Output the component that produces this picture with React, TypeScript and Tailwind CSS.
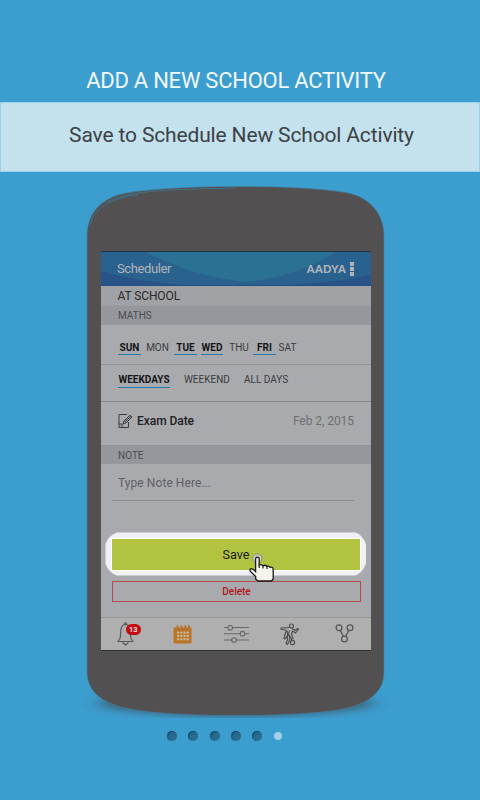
import React from "react";

const days = [
  { label: "SUN", on: true, cell: "w-[23px]" },
  { label: "MON", on: false, cell: "w-[33px]" },
  { label: "TUE", on: true, cell: "w-[23px]" },
  { label: "WED", on: true, cell: "w-[22px] ml-[4px]" },
  { label: "THU", on: false, cell: "w-[30px] pl-[2px]" },
  { label: "FRI", on: true, cell: "w-[23px]" },
  { label: "SAT", on: false, cell: "w-[23px]" },
];

function PhoneBody() {
  return (
    <svg className="absolute left-0 top-0" width="480" height="560" viewBox="0 180 480 560" fill="none">
      <defs>
        <filter id="soft" x="-20%" y="-100%" width="140%" height="300%">
          <feGaussianBlur stdDeviation="9 3.5" />
        </filter>
        <clipPath id="ground">
          <rect x="60" y="640" width="360" height="78" />
        </clipPath>
      </defs>
      <g clipPath="url(#ground)">
        <ellipse cx="236" cy="703" rx="137" ry="13" fill="#3f5866" opacity=".85" filter="url(#soft)" />
      </g>
      <path
        d="M87 236C87 213 101 198 126 193C157 188 197 186.500 236 186.500C279 186.500 318 188 346 192.500C370 197 384 214 384 236V672C384 693 368 703 344 709C315 714 276 715.500 236 715.500C194 715.500 154 714 124 708C101 702 87 691 87 672Z"
        fill="#525050"
        stroke="#4285a8"
        strokeWidth=".6"
      />
      <path d="M90 225C94 209 108 199 138 194.500M106 203C124 191 165 189.500 235 188" stroke="#3e7898" strokeWidth=".8" />
    </svg>
  );
}

function HeaderWaves() {
  return (
    <svg className="absolute inset-0" width="270" height="35" viewBox="0 0 270 35">
      <rect width="270" height="35" fill="#2a628f" />
      <path d="M45 1C80 19 110 27 145 31C184 27 212 15 235 1Z" fill="#2b7193" />
      <path d="M0 20C29 29 57 31 89 35H0ZM270 24C237 31 212 32 176 35H270Z" fill="#275389" />
      <rect width="270" height="1" fill="#1d3442" />
      <path d="M0 34.500H270" stroke="#244f7d" />
    </svg>
  );
}

function NoteIcon() {
  return (
    <svg width="15" height="16" viewBox="0 0 15 16" fill="none" stroke="#3c3c3e" strokeWidth="1">
      <path d="M9 1.500H1V14.500H10.500V9M1 11H4V14.500" />
      <path d="M5 11L6.200 7.700L12 2.200L14 4L8.200 9.700ZM6.200 7.700L8.200 9.700M7.200 8.700L12.800 3.300" />
    </svg>
  );
}

function BellIcon() {
  return (
    <svg width="28" height="26" viewBox="0 0 28 26" fill="none" stroke="#565657" strokeWidth="1.150">
      <path d="M1.500 20.500H17.500M2 20.500L4 17.500C5 14 4.300 10.500 5 8C5.800 5 7.500 3.500 9.500 3.500S13.200 5 14 8C14.700 10.500 14 14 15 17.500L17 20.500M8.500 3.500V2.500Q9.500 1.300 10.500 2.500V3.500M6.500 21.500L9.500 24L12.500 21.500" />
    </svg>
  );
}

function CalendarIcon() {
  return (
    <svg width="19" height="19" viewBox="0 0 19 19">
      <path d="M.5 2.500H3.500V.5H5.500V2.500H7.500V.5H9.500V2.500H11.500V.5H13.500V2.500H15V.5H17V2.500H18L18.500 3.500V17.500L17.500 18.500H1.500L.5 17.500Z" fill="#b87427" />
      {[6.5, 9.8, 13.1].map((y) =>
        [4, 7.2, 10.4, 13.6].map((x) => <rect key={`${x}-${y}`} x={x} y={y} width="2.200" height="2.200" fill="#c9b697" />),
      )}
    </svg>
  );
}

function SlidersIcon() {
  return (
    <svg width="25" height="18" viewBox="0 0 25 18" fill="#afafb0" stroke="#68686a" strokeWidth="1.100">
      <path d="M0 2.500H25M0 8.700H25M0 15H25" />
      <circle cx="6.200" cy="2.700" r="2.300" />
      <circle cx="18.500" cy="8.700" r="2.300" />
      <circle cx="10" cy="15" r="2.300" />
    </svg>
  );
}

function PlayerIcon() {
  return (
    <svg width="20" height="23" viewBox="0 0 20 23" fill="none" stroke="#4c4c4d" strokeWidth="1.100" strokeLinejoin="round">
      <circle cx="11.500" cy="3" r="2" />
      <path d="M9.500 4.500L1 5V6.200L6.500 7.200L5 11.500L4 15.500L5.200 16L7.300 12.500L7.500 17L6 20.500L7.500 21.500L9.500 17.500L9.500 12.500L11.500 16.500L13 15.500L11.500 11L12.500 8L15.500 10L18.800 6L17.500 5.500L15.300 7.500L12 5.500M7.500 8V12M9.200 7.500L8.500 13" />
      <circle cx="12.500" cy="19.500" r="2.100" />
    </svg>
  );
}

function NodesIcon() {
  return (
    <svg width="20" height="20" viewBox="0 0 20 20" fill="none" stroke="#555556" strokeWidth="1.250">
      <circle cx="4" cy="3.800" r="2.900" />
      <circle cx="15" cy="3.800" r="2.900" />
      <circle cx="9.500" cy="15" r="2.900" />
      <path d="M5.300 6.400L8.300 12.300M13.700 6.400L10.700 12.300" />
    </svg>
  );
}

function Pointer() {
  return (
    <svg className="absolute left-[142px] top-[21px]" width="30" height="31" viewBox="0 0 30 31">
      <circle cx="10.300" cy="5.500" r="4.600" fill="#d1d3cf" fillOpacity=".85" stroke="#7f8486" strokeWidth=".9" />
      <path
        d="M8.600 18.500V6Q8.600 4.200 10.400 4.200Q12.200 4.200 12.200 6V12Q14.600 10.800 16 12.800Q18.500 11.500 20 13.500Q22 12.500 23 14.300Q26.200 13.500 26.200 16.500V26L24.500 28H11L8.700 26V23.500L3.500 18.500Q2 16.500 4 15.700Q6 15.500 8.600 18.500Z"
        fill="#f6f3ec"
        stroke="#181818"
        strokeWidth="1.300"
      />
      <path d="M12.200 11.500V15M16 12.800V15.500M20 13.500V16" stroke="#181818" strokeWidth="1.100" />
    </svg>
  );
}

function AppHeader() {
  return (
    <header className="relative h-[35px]">
      <HeaderWaves />
      <div className="relative flex h-full items-center justify-between pl-4 pr-[17px] pt-px text-[#b2b5b8]">
        <span className="text-[13px] leading-4 tracking-[-0.4px]">Scheduler</span>
        <div className="flex items-center gap-1">
          <span className="font-['Lato'] text-[11px] font-black leading-4 tracking-[0.35px]">AADYA</span>
          <span className="flex flex-col gap-[1px]">
            <i className="size-[4px] bg-[#b2b5b8]" />
            <i className="size-[4px] bg-[#b2b5b8]" />
            <i className="size-[4px] bg-[#b2b5b8]" />
          </span>
        </div>
      </div>
    </header>
  );
}

function AppScreen() {
  return (
    <main className="relative flex h-[400px] w-[270px] flex-col bg-[#a9aaae] text-[#3b3b3d]">
      <AppHeader />
      <div className="flex h-[20px] items-center border-b border-[#9d9da1] bg-[#a1a2a6] pl-[16.500px] text-[12px] leading-4 tracking-[-0.1px] text-[#29292b]">AT SCHOOL</div>
      <div className="flex h-[19px] items-center bg-[#96979c] pl-[17px] text-[10px] leading-4 text-[#4b4b4e]">MATHS</div>
      <div className="flex h-[40px] border-b border-[#929397] pl-[17px] pt-[16px] text-[10px] leading-[14px]">
        {days.map((day) => (
          <span
            key={day.label}
            className={`flex h-[14px] justify-center ${day.cell} ${day.on ? "border-b border-[#2878a8] font-bold text-[#151516]" : ""}`}
          >
            {day.label}
          </span>
        ))}
      </div>
      <div className="flex h-[37px] border-b border-[#87888c] pl-[17px] pt-[8px] text-[10px] leading-[14px]">
        <span className="flex h-[15px] w-[52px] justify-center border-b border-[#2878a8] font-bold text-[#151516]">WEEKDAYS</span>
        <span className="ml-[14px] w-[60px]">WEEKEND</span>
        <span>ALL DAYS</span>
      </div>
      <div className="flex h-[44px] items-center justify-between border-b border-[#929397] pb-[5px] pl-[17px] pr-[17px]">
        <span className="flex items-center gap-1 text-[12px] font-medium leading-4 tracking-[-0.05px] text-[#202022]">
          <NoteIcon />
          Exam Date
        </span>
        <span className="text-[12px] leading-4 tracking-[-0.05px] text-[#6e6e71]">Feb 2, 2015</span>
      </div>
      <div className="flex h-[18px] items-center bg-[#96979c] pl-[17px] pt-px text-[10px] leading-4 text-[#4b4b4e]">NOTE</div>
      <div className="ml-[11px] mr-[17px] flex h-[37px] items-center border-b border-[#8b8c90] pl-[6px] pt-[2px] text-[12px] leading-4 tracking-[0.07px] text-[#5f5f62]">Type Note Here...</div>
      <div className="relative mt-[31px] ml-[4px] h-[44px] w-[262px] p-[7px]">
        <svg className="absolute inset-0" width="262" height="44" viewBox="0 0 262 44">
          <path d="M12 .5H250Q257 2 261 12V31Q258 41 250 43.500H12Q4 41 .5 32V12Q4 3 12 .5Z" fill="#f0f0f6" />
        </svg>
        <button className="relative flex h-[31px] w-[248px] items-center justify-center bg-[#b2c342] text-[12.500px] leading-4 tracking-[0.1px] text-[#171914] shadow-[0_0_0_1px_#fff]">Save</button>
        <Pointer />
      </div>
      <button className="ml-[11px] mt-[5px] flex h-[21px] w-[249px] items-center justify-center border border-[#b54b4b] text-[10px] font-medium leading-4 text-[#b0161b]">Delete</button>
      <nav className="mt-auto flex h-[34px] items-center border-t border-b border-t-[#98999c] border-b-[#2f3032] bg-[#afafb0]">
        <div className="relative ml-[15px] w-[57px]">
          <BellIcon />
          <span className="absolute left-[10px] top-[3px] flex h-[11px] w-[14.500px] items-center justify-center rounded-full bg-[#c20d13] text-[7.500px] font-bold leading-none text-[#ddd]">13</span>
        </div>
        <div className="w-[51px]"><CalendarIcon /></div>
        <div className="w-[56px]"><SlidersIcon /></div>
        <div className="w-[55px]"><PlayerIcon /></div>
        <NodesIcon />
      </nav>
    </main>
  );
}

export default function App() {
  return (
    <div className="h-[800px] w-[480px] overflow-hidden bg-[#3c9dcf] font-['Roboto',sans-serif]">
      <h1 className="flex h-[102px] items-end justify-center pb-[6px] pr-[8px] text-[22px] leading-[30px] tracking-[-0.25px] text-[#f2f9fc]">ADD A NEW SCHOOL ACTIVITY</h1>
      <p className="flex h-[70px] items-center justify-center border border-[#9cd0e8] bg-[#c4e1ee] pb-[4px] pl-[3px] text-[21px] leading-[30px] tracking-[-0.15px] text-[#3c4145]">Save to Schedule New School Activity</p>
      <section className="relative mt-[8px] h-[550px] pl-[101px] pt-[71px]">
        <PhoneBody />
        <AppScreen />
      </section>
      <div className="flex items-center gap-[11.300px] pl-[167px] pt-[1px]">
        {[0, 1, 2, 3, 4].map((n) => (
          <span key={n} className="size-[10px] rounded-full bg-[#276b8f] shadow-[inset_1px_1px_1px_#174b67]" />
        ))}
        <span className="ml-[0.500px] size-[8px] rounded-full bg-[#a0d1e9]" />
      </div>
    </div>
  );
}
